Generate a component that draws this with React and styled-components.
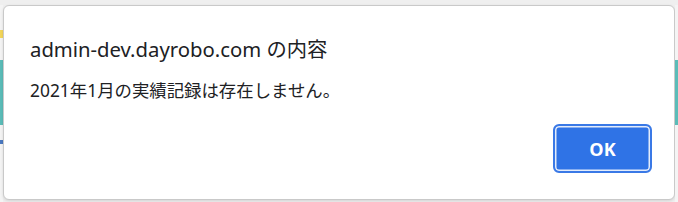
import React from "react";
import styled, { createGlobalStyle } from "styled-components";

const Global = createGlobalStyle`
  html, body { margin: 0; padding: 0; background: #eeeeee; }
  body { width: 678px; height: 202px; overflow: hidden; }
`;

const Page = styled.div`
  display: grid;
  grid-template-columns: 3px 1fr 3px;
  width: 678px;
  height: 202px;
  padding-top: 5px;
  box-sizing: border-box;
  background: #efefef;
`;

const Side = styled.div`
  display: flex;
  flex-direction: column;
  background: #f4f4f4;
`;

const Strip = styled.div`
  height: ${(p) => p.$h}px;
  background: ${(p) => p.$c};
`;

const Dialog = styled.div`
  background: #ffffff;
  border: 1px solid #c9c9c9;
  border-radius: 6px;
  height: 195px;
  box-sizing: border-box;
  display: flex;
  flex-direction: column;
  padding: 30px 22px 0 26px;
  box-shadow: 0 1px 3px rgba(0, 0, 0, 0.12);
  font-family: "Noto Sans", "Noto Sans CJK JP", sans-serif;
  color: #202124;
`;

const Title = styled.div`
  font-size: 20.3px;
  line-height: 27px;
`;

const Message = styled.div`
  margin-top: 16px;
  font-size: 17.4px;
  line-height: 22px;
  font-family: "Noto Sans", "Noto Sans CJK JP", sans-serif;
`;

const Actions = styled.div`
  display: flex;
  justify-content: flex-end;
  margin-top: 23px;
`;

const Button = styled.button`
  width: 99px;
  height: 49px;
  border-radius: 6px;
  border: 2px solid #3a79e6;
  background: #2f73e6;
  box-shadow: inset 0 0 0 1.5px #e3ecfb;
  color: #ffffff;
  font-family: "Open Sans", "Noto Sans", sans-serif;
  font-weight: 700;
  font-size: 18px;
  cursor: pointer;
`;

export default function App() {
  return (
    <>
      <Global />
      <Page>
        <Side>
          <Strip $h={25} $c="#f4f4f4" />
          <Strip $h={8} $c="#f3d65a" />
          <Strip $h={22} $c="#f4f4f4" />
          <Strip $h={65} $c="#5bbcb8" />
          <Strip $h={15} $c="#f4f4f4" />
          <Strip $h={4} $c="#4a78c0" />
        </Side>
        <Dialog>
          <Title>admin-dev.dayrobo.com の内容</Title>
          <Message>2021年1月の実績記録は存在しません。</Message>
          <Actions>
            <Button>OK</Button>
          </Actions>
        </Dialog>
        <Side>
          <Strip $h={55} $c="#f4f4f4" />
          <Strip $h={65} $c="#5bbcb8" />
        </Side>
      </Page>
    </>
  );
}
